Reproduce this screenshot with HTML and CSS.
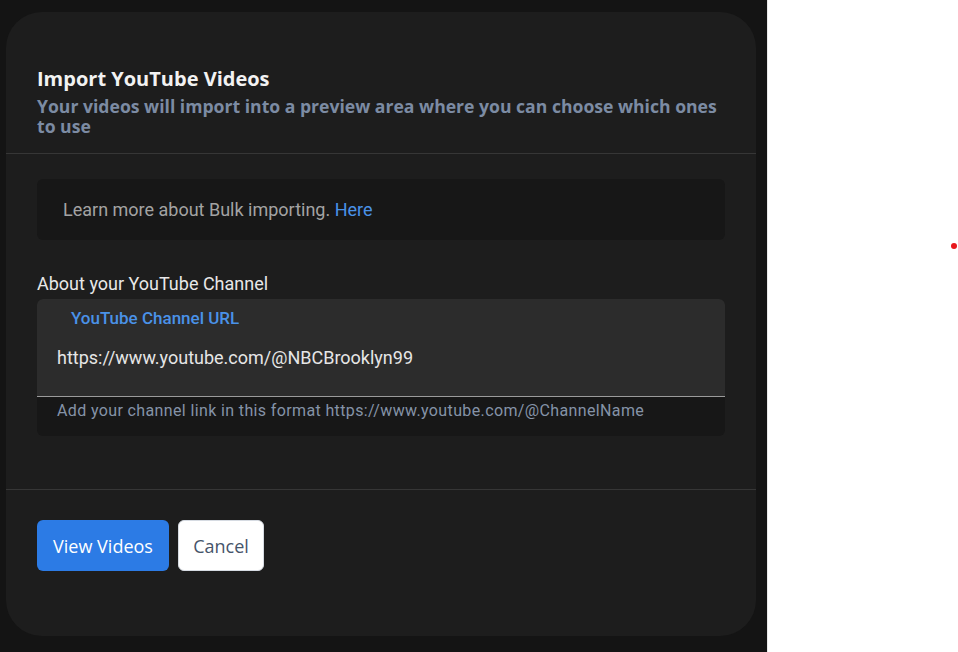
FILE: index.html
```html
<!DOCTYPE html>
<html lang="en">
<head>
<meta charset="utf-8">
<title>Import YouTube Videos</title>
<link rel="stylesheet" href="styles.css">
</head>
<body>
<div class="page">
  <div class="backdrop">
    <div class="modal">
      <div class="modal-header">
        <h2 class="title">Import YouTube Videos</h2>
        <p class="subtitle">Your videos will import into a preview area where you can choose which ones to use</p>
      </div>
      <div class="modal-body">
        <div class="info-box">Learn more about Bulk importing. <a class="link" href="#">Here</a></div>
        <div class="section-label">About your YouTube Channel</div>
        <div class="field">
          <div class="field-input">
            <div class="field-label">YouTube Channel URL</div>
            <div class="field-value">https://www.youtube.com/@NBCBrooklyn99</div>
          </div>
          <div class="field-help">Add your channel link in this format https://www.youtube.com/@ChannelName</div>
        </div>
      </div>
      <div class="modal-footer">
        <button class="btn btn-primary">View Videos</button>
        <button class="btn btn-secondary">Cancel</button>
      </div>
    </div>
  </div>
  <div class="side"><span class="dot"></span></div>
</div>
</body>
</html>
```
FILE: styles.css
```css
* { box-sizing: border-box; }
html, body { margin: 0; padding: 0; }
body {
  width: 958px;
  height: 652px;
  overflow: hidden;
  font-family: Roboto, "Liberation Sans", sans-serif;
}
.page {
  display: flex;
  height: 652px;
}
.backdrop {
  width: 768px;
  background: #141414;
  border-right: 1px solid #e8e8e8;
  padding: 12px 11px 16px 6px;
}
.side {
  flex: 1;
  background: #ffffff;
  position: relative;
}
.dot {
  position: absolute;
  left: 183px;
  top: 243px;
  width: 6px;
  height: 6px;
  border-radius: 50%;
  background: #e8161b;
}
.modal {
  width: 750px;
  height: 624px;
  background: #1d1d1d;
  border-radius: 36px;
  display: flex;
  flex-direction: column;
}
.modal-header {
  padding: 55px 31px 17px 31px;
  border-bottom: 1px solid #363636;
}
.title {
  margin: 0;
  font-family: "Open Sans", "Noto Sans", sans-serif;
  font-weight: 700;
  font-size: 20px;
  line-height: 24px;
  color: #f2f2f2;
}
.subtitle {
  margin: 5px 0 0 0;
  font-family: "Open Sans", "Noto Sans", sans-serif;
  font-weight: 700;
  font-size: 17.6px;
  line-height: 20px;
  color: #7c8ba3;
}
.modal-body {
  padding: 25px 31px 0 31px;
  height: 336px;
  border-bottom: 1px solid #363636;
}
.info-box {
  height: 61px;
  background: #171717;
  border-radius: 6px;
  padding: 0 26px;
  display: flex;
  align-items: center;
  font-size: 18px;
  color: #a3a3a3;
  white-space: pre;
}
.link {
  color: #4a92e8;
  text-decoration: none;
}
.section-label {
  margin-top: 33px;
  font-size: 18px;
  line-height: 22px;
  color: #e8e8e8;
}
.field {
  margin-top: 4px;
  background: #171717;
  border-radius: 6px;
}
.field-input {
  height: 98px;
  background: #2c2c2c;
  border-radius: 6px 6px 0 0;
  border-bottom: 1px solid #9b9b9b;
  padding: 8px 20px 0 20px;
}
.field-label {
  padding-left: 14px;
  font-size: 17px;
  font-weight: 500;
  line-height: 22px;
  color: #4a92e8;
}
.field-value {
  margin-top: 18px;
  font-size: 18px;
  line-height: 22px;
  color: #e6e6e6;
}
.field-help {
  height: 39px;
  padding: 4px 20px 0 20px;
  font-size: 16px;
  letter-spacing: 0.37px;
  line-height: 20px;
  color: #8593a7;
}
.modal-footer {
  padding: 30px 31px 0 31px;
  display: flex;
  gap: 9px;
  align-items: flex-start;
}
.btn {
  height: 51px;
  border-radius: 6px;
  font-family: "Open Sans", "Noto Sans", sans-serif;
  font-size: 18px;
  padding: 0 10px;
  border: none;
  cursor: pointer;
}
.btn-primary {
  width: 132px;
  background: #2c7be5;
  color: #ffffff;
}
.btn-secondary {
  width: 86px;
  background: #ffffff;
  color: #46546a;
  border: 1px solid #d6dbe2;
}
```
